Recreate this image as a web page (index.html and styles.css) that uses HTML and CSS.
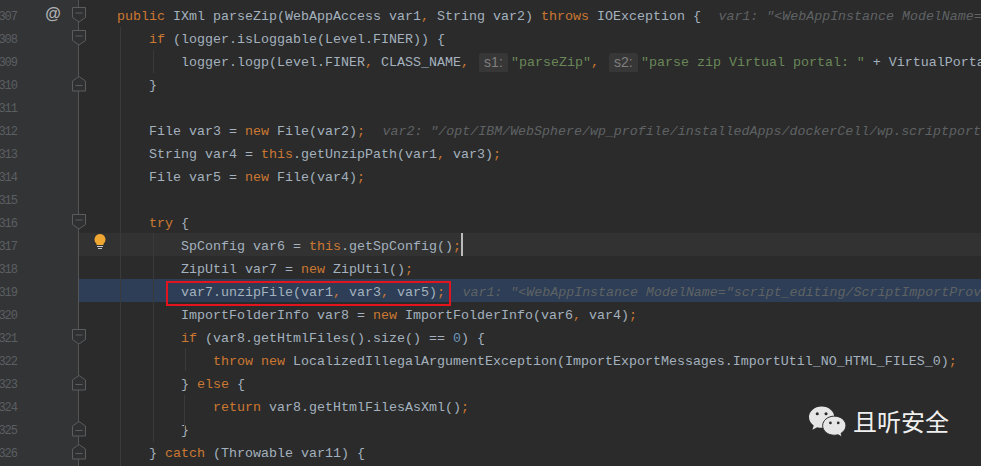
FILE: index.html
```html
<!DOCTYPE html>
<html lang="en">
<head>
<meta charset="utf-8">
<title>Editor</title>
<link rel="stylesheet" href="styles.css">
</head>
<body>
<main class="editor">
<div class="row"><div class="gutter"><span class="num">307</span><span class="mark">@</span><svg class="fold" viewBox="0 0 14 16"><path d="M.5.5h13v10L7 15 .5 10.500z"/><path d="M3.500 6h7"/></svg></div><div class="code"><span class="k">public</span> IXml parseZip(WebAppAccess var1<span class="k">,</span> String var2) <span class="k">throws</span> IOException {<span class="hint">var1: "&lt;WebAppInstance ModelName="script_editing/ScriptImportProvider"</span></div></div>
<div class="row"><div class="gutter"><span class="num">308</span><svg class="fold" viewBox="0 0 14 16"><path d="M.5.5h13v10L7 15 .5 10.500z"/><path d="M3.500 6h7"/></svg></div><div class="code">    <span class="k">if</span> (logger.isLoggable(Level.FINER)) {</div></div>
<div class="row"><div class="gutter"><span class="num">309</span></div><div class="code">        logger.logp(Level.FINER<span class="k">,</span> CLASS_NAME<span class="k">,</span> <span class="badge">s1:</span><span class="s">"parseZip"</span><span class="k">,</span> <span class="badge">s2:</span><span class="s">"parse zip Virtual portal: "</span> + VirtualPortalContext.getName());</div></div>
<div class="row"><div class="gutter"><span class="num">310</span><svg class="fold" viewBox="0 0 14 16"><path d="M7 .5l6.500 4.500v10H.5V5z"/><path d="M3.500 9.500h7"/></svg></div><div class="code">    }</div></div>
<div class="row"><div class="gutter"><span class="num">311</span></div><div class="code"></div></div>
<div class="row"><div class="gutter"><span class="num">312</span></div><div class="code">    File var3 = <span class="k">new</span> File(var2)<span class="k">;</span><span class="hint">var2: "/opt/IBM/WebSphere/wp_profile/installedApps/dockerCell/wp.scriptportlet.app.ear"</span></div></div>
<div class="row"><div class="gutter"><span class="num">313</span></div><div class="code">    String var4 = <span class="k">this</span>.getUnzipPath(var1<span class="k">,</span> var3)<span class="k">;</span></div></div>
<div class="row"><div class="gutter"><span class="num">314</span></div><div class="code">    File var5 = <span class="k">new</span> File(var4)<span class="k">;</span></div></div>
<div class="row"><div class="gutter"><span class="num">315</span></div><div class="code"></div></div>
<div class="row"><div class="gutter"><span class="num">316</span><svg class="fold" viewBox="0 0 14 16"><path d="M.5.5h13v10L7 15 .5 10.500z"/><path d="M3.500 6h7"/></svg></div><div class="code">    <span class="k">try</span> {</div></div>
<div class="row"><div class="gutter"><span class="num">317</span></div><div class="code current">        SpConfig var6 = <span class="k">this</span>.getSpConfig()<span class="k">;</span><span class="caret"></span><svg class="bulb" viewBox="0 0 12 16"><path class="bulb-glass" d="M6 0a5.500 5.500 0 0 1 3.500 9.700V11h-7V9.700A5.500 5.500 0 0 1 6 0z"/><path class="bulb-base" d="M3 12.500h6M4 14.500h4"/></svg></div></div>
<div class="row"><div class="gutter"><span class="num">318</span></div><div class="code">        ZipUtil var7 = <span class="k">new</span> ZipUtil()<span class="k">;</span></div></div>
<div class="row"><div class="gutter"><span class="num">319</span></div><div class="code selected">        var7.unzipFile(var1<span class="k">,</span> var3<span class="k">,</span> var5)<span class="k">;</span><span class="hint">var1: "&lt;WebAppInstance ModelName="script_editing/ScriptImportProvider"</span></div></div>
<div class="row"><div class="gutter"><span class="num">320</span></div><div class="code">        ImportFolderInfo var8 = <span class="k">new</span> ImportFolderInfo(var6<span class="k">,</span> var4)<span class="k">;</span></div></div>
<div class="row"><div class="gutter"><span class="num">321</span><svg class="fold" viewBox="0 0 14 16"><path d="M.5.5h13v10L7 15 .5 10.500z"/><path d="M3.500 6h7"/></svg></div><div class="code">        <span class="k">if</span> (var8.getHtmlFiles().size() == <span class="n">0</span>) {</div></div>
<div class="row"><div class="gutter"><span class="num">322</span></div><div class="code">            <span class="k">throw new</span> LocalizedIllegalArgumentException(ImportExportMessages.ImportUtil_NO_HTML_FILES_0)<span class="k">;</span></div></div>
<div class="row"><div class="gutter"><span class="num">323</span><svg class="fold" viewBox="0 0 14 16"><path d="M7 .5l6.500 4.500v10H.5V5z"/><path d="M3.500 9.500h7"/></svg></div><div class="code">        } <span class="k">else</span> {</div></div>
<div class="row"><div class="gutter"><span class="num">324</span></div><div class="code">            <span class="k">return</span> var8.getHtmlFilesAsXml()<span class="k">;</span></div></div>
<div class="row"><div class="gutter"><span class="num">325</span><svg class="fold" viewBox="0 0 14 16"><path d="M7 .5l6.500 4.500v10H.5V5z"/><path d="M3.500 9.500h7"/></svg></div><div class="code">        }</div></div>
<div class="row"><div class="gutter"><span class="num">326</span><svg class="fold" viewBox="0 0 14 16"><path d="M7 .5l6.500 4.500v10H.5V5z"/><path d="M3.500 9.500h7"/></svg></div><div class="code">    } <span class="k">catch</span> (Throwable var11) {</div></div>

<i class="guide g-method"></i>
<i class="guide g-if"></i>
<i class="guide g-try"></i>
<i class="guide g-throw"></i>
<i class="guide g-return"></i>
<div class="callout"></div>

<div class="watermark">
<svg class="wechat" viewBox="0 0 40 32"><path class="bubble" d="M14 1C6.800 1 1 5.900 1 12c0 3.500 1.900 6.500 4.900 8.600L4.500 25l5-2.600c1.400.4 2.900.6 4.500.6 7.200 0 13-4.900 13-11S21.200 1 14 1z"/><circle class="eye" cx="9.500" cy="8.500" r="1.600"/><circle class="eye" cx="18.500" cy="8.500" r="1.600"/><path class="bubble front" d="M27 11c-6.600 0-12 4.400-12 9.800s5.400 9.800 12 9.800c1.300 0 2.600-.2 3.800-.5l4.200 2.400-1.100-3.900c3-1.800 5-4.600 5-7.800C39 15.400 33.600 11 27 11z"/><circle class="eye" cx="23" cy="18" r="1.400"/><circle class="eye" cx="31" cy="18" r="1.400"/></svg>
<span class="brand">且听安全</span>
</div>
</main>
</body>
</html>
```
FILE: styles.css
```css
html, body {
  margin: 0;
  height: 100%;
  overflow: hidden;
  background: #2b2b2b;
}

.editor {
  position: relative;
  box-sizing: border-box;
  width: 981px;
  height: 466px;
  padding-top: 3px;
  overflow: hidden;
  background: linear-gradient(to right, #323436 78px, #555 78px, #555 79px, #2b2b2b 79px);
  color: #a4b1be;
  font-family: "Liberation Mono", monospace;
  font-size: 13.33px;
}

.row {
  display: flex;
  height: 23px;
}

.gutter {
  flex: 0 0 79px;
  display: flex;
  align-items: center;
}

.num {
  flex: 0 0 17px;
  min-width: 0;
  display: flex;
  justify-content: flex-end;
  padding-top: 4px;
  color: #5c5f62;
  font-size: 12px;
  letter-spacing: -1px;
}

.mark {
  width: 16px;
  margin-top: -2px;
  margin-left: 28px;
  text-align: center;
  color: #afb1b3;
  font: bold 16px/1 "Liberation Sans", sans-serif;
}

.fold {
  flex: none;
  width: 14px;
  height: 16px;
  margin-left: auto;
  margin-right: -7px;
  fill: #2f3032;
  stroke: #5c5c5c;
  stroke-width: 1;
}

.code {
  position: relative;
  flex: 1;
  min-width: 0;
  box-sizing: border-box;
  padding: 4px 0 0 38px;
  line-height: 19px;
  white-space: pre;
  overflow: hidden;
}

.current { background: #323232; }
.selected { background: #2d3e56; }

.k { color: #cc7832; }
.s { color: #6a8759; }
.n { color: #6897bb; }

.hint {
  margin-left: 17.5px;
  color: #5f6264;
  font-style: italic;
  font-size: 13.3px;
}

.badge {
  display: inline-block;
  box-sizing: border-box;
  width: 29px;
  height: 20px;
  margin: 0 3px 0 2px;
  border-radius: 3px;
  background: #373737;
  color: #7f7f7f;
  font: 14px/19px "Liberation Sans", sans-serif;
  text-align: center;
  vertical-align: -1px;
}

.caret {
  position: absolute;
  top: 0;
  width: 2px;
  height: 23px;
  background: #bbb;
}

.bulb {
  position: absolute;
  left: 15px;
  top: 1px;
  width: 12px;
  height: 16px;
}

.bulb-glass { fill: #f0a732; }
.bulb-base { fill: none; stroke: #c9c9c9; stroke-width: 1; }

.guide {
  position: absolute;
  width: 1px;
  background: #3a3a3a;
}

.g-method { left: 120px; top: 27px; height: 439px; }
.g-if { left: 153px; top: 50px; height: 23px; }
.g-try { left: 153px; top: 233px; height: 209px; }
.g-throw { left: 185px; top: 348px; height: 23px; }
.g-return { left: 184px; top: 395px; height: 35px; }

.callout {
  position: absolute;
  left: 166px;
  top: 281px;
  box-sizing: border-box;
  width: 285px;
  height: 25px;
  border: 2px solid #e2141f;
}

.watermark {
  position: absolute;
  left: 808px;
  top: 404px;
  display: flex;
  align-items: center;
  gap: 6px;
}

.wechat {
  width: 39px;
  height: 32px;
}

.bubble { fill: #e6e6e6; }
.bubble.front { stroke: #2b2b2b; stroke-width: 1; }
.eye { fill: #2b2b2b; }

.brand {
  color: #f0f0f0;
  font-family: "Noto Sans CJK SC", sans-serif;
  font-size: 24px;
  line-height: 34px;
}
```
